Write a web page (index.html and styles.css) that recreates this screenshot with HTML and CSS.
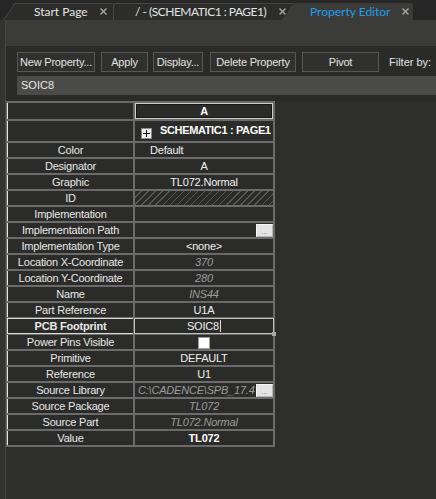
FILE: index.html
```html
<!DOCTYPE html>
<html>
<head>
<meta charset="utf-8">
<link rel="stylesheet" href="styles.css">
</head>
<body>
<div class="tabbar">
  <div class="tab first"><span class="label">Start Page</span><svg class="x" width="7" height="7" viewBox="0 0 7 7"><path d="M0.5 0.5L6.5 6.5M6.5 0.5L0.5 6.5"/></svg></div>
  <div class="tab second"><span class="label">/ - (SCHEMATIC1 : PAGE1)</span><svg class="x" width="7" height="7" viewBox="0 0 7 7"><path d="M0.5 0.5L6.5 6.5M6.5 0.5L0.5 6.5"/></svg></div>
  <div class="tab active"><span class="label">Property Editor</span><svg class="x" width="7" height="7" viewBox="0 0 7 7"><path d="M0.5 0.5L6.5 6.5M6.5 0.5L0.5 6.5"/></svg></div>
</div>
<div class="frame">
  <div class="inner">
    <div class="panel-top"></div>
    <div class="toolbar">
      <div class="buttons">
        <div class="btn b1">New Property...</div>
        <div class="btn b2">Apply</div>
        <div class="btn b3">Display...</div>
        <div class="btn b4">Delete Property</div>
        <div class="btn b5">Pivot</div>
        <span class="filter">Filter by:</span>
      </div>
      <div class="search">SOIC8</div>
    </div>
    <div class="grid-area">
      <div class="grid">
        <div class="k"></div>
        <div class="v head">A</div>

        <div class="k"></div>
        <div class="v group"><span class="plus"><svg width="9" height="9" viewBox="0 0 9 9"><path d="M1 4.5H8M4.5 1V8"/></svg></span><span class="gname">SCHEMATIC1 : PAGE1</span></div>

        <div class="k">Color</div>
        <div class="v left">Default</div>

        <div class="k">Designator</div>
        <div class="v">A</div>

        <div class="k">Graphic</div>
        <div class="v">TL072.Normal</div>

        <div class="k">ID</div>
        <div class="v hatch"></div>

        <div class="k">Implementation</div>
        <div class="v"></div>

        <div class="k">Implementation Path</div>
        <div class="v browse"><span class="dots">...</span></div>

        <div class="k">Implementation Type</div>
        <div class="v">&lt;none&gt;</div>

        <div class="k">Location X-Coordinate</div>
        <div class="v dim">370</div>

        <div class="k">Location Y-Coordinate</div>
        <div class="v dim">280</div>

        <div class="k">Name</div>
        <div class="v dim">INS44</div>

        <div class="k">Part Reference</div>
        <div class="v">U1A</div>

        <div class="k sel">PCB Footprint</div>
        <div class="v edit"><span>SOIC8</span><span class="caret"></span><span class="grip"></span></div>

        <div class="k">Power Pins Visible</div>
        <div class="v"><span class="check"></span></div>

        <div class="k">Primitive</div>
        <div class="v">DEFAULT</div>

        <div class="k">Reference</div>
        <div class="v">U1</div>

        <div class="k">Source Library</div>
        <div class="v browse dim"><span class="path">C:\CADENCE\SPB_17.4</span><span class="dots">...</span></div>

        <div class="k">Source Package</div>
        <div class="v dim">TL072</div>

        <div class="k">Source Part</div>
        <div class="v dim">TL072.Normal</div>

        <div class="k">Value</div>
        <div class="v strong">TL072</div>
      </div>
    </div>
  </div>
</div>
</body>
</html>
```

FILE: styles.css
```css
* { box-sizing: border-box; }

html, body {
  margin: 0;
  padding: 0;
}

body {
  width: 436px;
  height: 499px;
  overflow: hidden;
  background: #262626;
  font-family: "Liberation Sans", Arial, sans-serif;
  font-size: 11px;
}

/* ---------- tabs ---------- */
.tabbar {
  height: 20px;
  display: flex;
  align-items: flex-end;
  padding-left: 3px;
  background: #262626;
}

.tab {
  --bg: #2c2d2b;
  --line: #454644;
  position: relative;
  height: 17px;
  display: flex;
  align-items: center;
  font-family: Lato, "Liberation Sans", sans-serif;
  font-size: 12px;
  color: #e4e4e4;
  white-space: nowrap;
}

.tab::before {
  content: "";
  position: absolute;
  left: 0;
  top: 0;
  bottom: 0;
  width: 30px;
  background: var(--bg);
  border-left: 1px solid var(--line);
  border-top: 1px solid var(--line);
  transform: skewX(-35deg);
  transform-origin: bottom left;
}

.tab::after {
  content: "";
  position: absolute;
  left: 12px;
  right: 0;
  top: 0;
  bottom: 0;
  background: var(--bg);
  border-top: 1px solid var(--line);
}

.tab > * {
  position: relative;
  z-index: 1;
}

.tab .x {
  margin-left: auto;
  stroke: #a8a8a8;
  stroke-width: 1.4;
  fill: none;
}

.first {
  width: 110px;
  padding-left: 31px;
}
.first .x { margin-right: 6px; }

.second {
  width: 180px;
  padding-left: 22px;
}
.second .label { letter-spacing: -0.5px; }
.second::before { display: none; }
.second::after {
  left: 0;
  border-left: 1px solid var(--line);
  border-top-left-radius: 3px;
}
.second .x { margin-right: 7px; }

.active {
  --bg: #3b3c3a;
  --line: #3b3c3a;
  margin-left: -11px;
  width: 131px;
  padding-left: 28px;
  z-index: 2;
  color: #219de6;
}
.active::after { border-top-right-radius: 3px; }
.active .x { margin-right: 4px; }

/* ---------- frame ---------- */
.frame {
  height: 479px;
  border-left: 5px solid #333432;
}

.inner {
  height: 100%;
  border-left: 1px solid #474846;
  display: flex;
  flex-direction: column;
}

.panel-top {
  height: 26px;
  background: #3b3c3a;
  flex: none;
}

.toolbar {
  flex: none;
  background: #2a2b29;
  padding: 6px 0 6px 11px;
}

.buttons {
  display: flex;
  align-items: center;
  height: 20px;
}

.btn {
  height: 20px;
  border: 1px solid #575856;
  background: #30312f;
  color: #e2e2e2;
  display: flex;
  align-items: center;
  justify-content: center;
  white-space: nowrap;
  letter-spacing: -0.2px;
}
.b1 { width: 78px; margin-right: 6px; }
.b2 { width: 47px; margin-right: 5px; }
.b3 { width: 50px; margin-right: 7px; }
.b4 { width: 86px; margin-right: 6px; }
.b5 { width: 77px; margin-right: 10px; }

.filter {
  color: #e2e2e2;
  white-space: nowrap;
}

.search {
  margin-top: 4px;
  height: 19px;
  line-height: 19px;
  background: #4b4c4a;
  color: #e6e6e6;
  padding-left: 4px;
}

/* ---------- grid ---------- */
.grid-area {
  flex: 1;
  background: #2e2f2d;
}

.grid {
  width: 269px;
  display: grid;
  grid-template-columns: 126px 138px;
  grid-template-rows: 16px 20px;
  grid-auto-rows: 14px;
  gap: 2px;
  padding: 2px 2px 2px 1px;
  background: #6b6b6b;
}

.k, .v {
  background: #2b2c2a;
  line-height: 14px;
  text-align: center;
  white-space: nowrap;
  overflow: hidden;
  letter-spacing: -0.2px;
}

.k {
  border-left: 1px solid #e4e4e4;
  color: #e8e8e8;
}

.v {
  color: #f0f0f0;
}

.v.left {
  text-align: left;
  padding-left: 15px;
}

.v.dim {
  color: #9b9b9b;
  font-style: italic;
}

.v.strong {
  font-weight: bold;
  color: #ffffff;
}

.v.head {
  font-weight: bold;
  color: #ffffff;
  border: 1px solid #cfcfcf;
  box-shadow: inset 0 0 0 1px #151515;
  line-height: 14px;
}

.v.group {
  display: flex;
  align-items: flex-start;
  padding-left: 6px;
}

.plus {
  width: 11px;
  height: 11px;
  margin-top: 7px;
  background: #f2f2f2;
  border: 1px solid #8c8c8c;
  display: flex;
  align-items: center;
  justify-content: center;
}
.plus svg {
  stroke: #111;
  stroke-width: 1;
  fill: none;
}

.gname {
  margin-left: 8px;
  margin-top: 2px;
  font-weight: bold;
  color: #ffffff;
  letter-spacing: -0.35px;
}

.v.hatch {
  background:
    repeating-linear-gradient(135deg, transparent 0 4px, #575856 4px 5px),
    #2b2c2a;
}

.v.browse {
  display: flex;
  align-items: flex-start;
  justify-content: flex-end;
}

.v.browse .path {
  flex: 1;
  min-width: 0;
  overflow: hidden;
  text-align: left;
  padding-left: 3px;
}

.dots {
  flex: none;
  width: 17px;
  height: 13px;
  margin-top: 1px;
  background: #e4e4e4;
  border: 1px solid #f6f6f6;
  border-right-color: #b8b8b8;
  border-bottom-color: #b8b8b8;
  color: #8a8a8a;
  font-style: normal;
  font-size: 8px;
  line-height: 14px;
  letter-spacing: 0;
  text-align: center;
}

.k.sel {
  font-weight: bold;
  box-shadow: 0 -1px 0 #dcdcdc, 0 1px 0 #dcdcdc;
  position: relative;
  z-index: 1;
}

.v.edit {
  position: relative;
  z-index: 1;
  overflow: visible;
  box-shadow: 0 0 0 1px #bfbfbf;
  display: flex;
  justify-content: center;
  align-items: center;
}

.caret {
  width: 1px;
  height: 12px;
  margin-left: 1px;
  background: #e0e0e0;
}

.grip {
  position: absolute;
  right: -3px;
  bottom: -3px;
  width: 4px;
  height: 4px;
  background: #a9a9a9;
}

.check {
  display: block;
  width: 12px;
  height: 12px;
  margin: 2px auto 0;
  background: #ffffff;
  border: 1px solid #9a9a9a;
}
```
